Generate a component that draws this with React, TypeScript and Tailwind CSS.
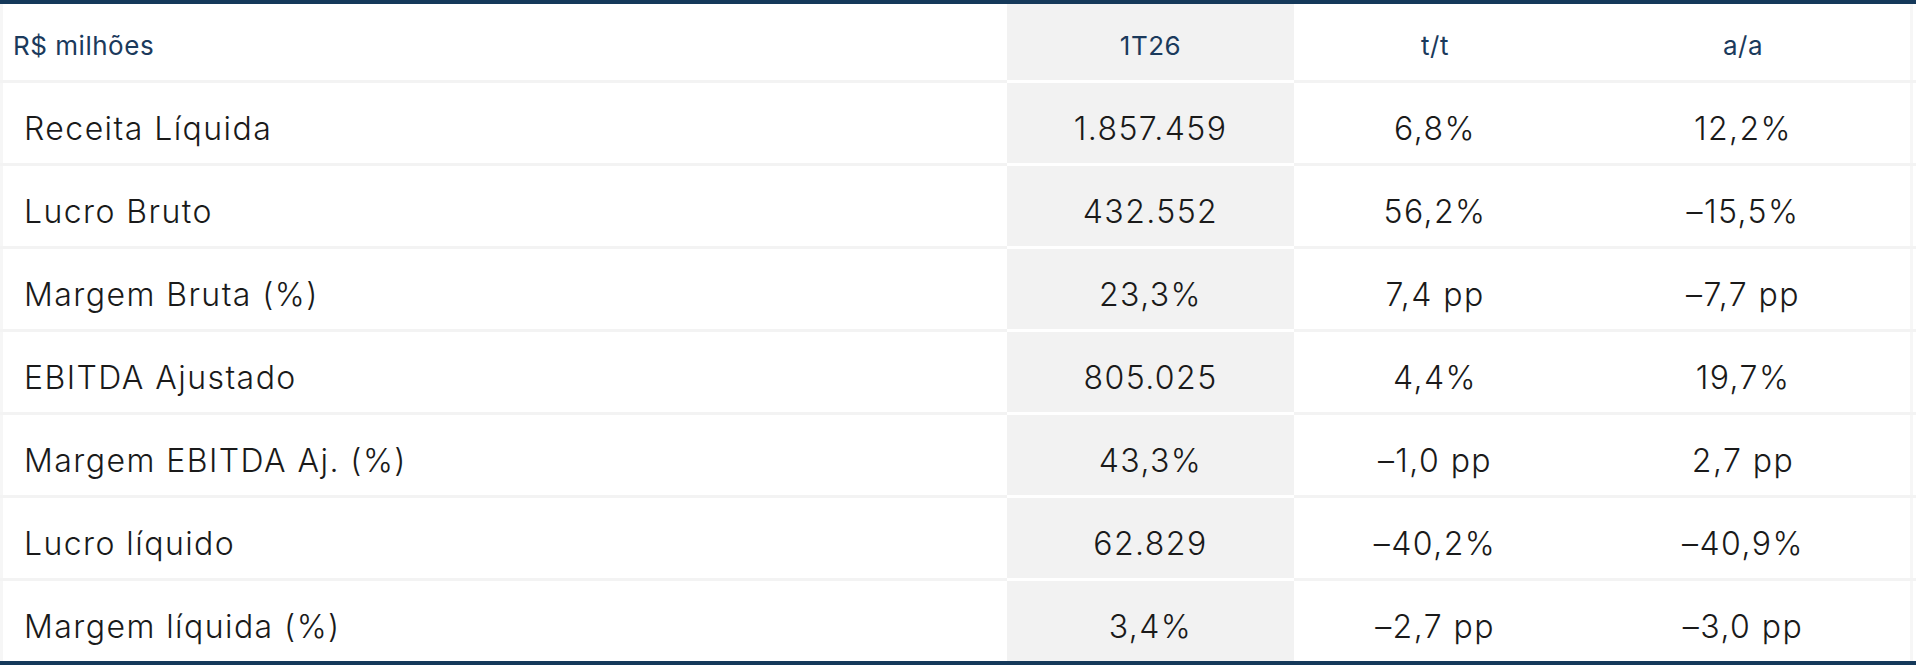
import React from 'react';

const rows = [
  { label: 'Receita Líquida', v: '1.857.459', qoq: '6,8%', yoy: '12,2%' },
  { label: 'Lucro Bruto', v: '432.552', qoq: '56,2%', yoy: '–15,5%' },
  { label: 'Margem Bruta (%)', v: '23,3%', qoq: '7,4 pp', yoy: '–7,7 pp' },
  { label: 'EBITDA Ajustado', v: '805.025', qoq: '4,4%', yoy: '19,7%' },
  { label: 'Margem EBITDA Aj. (%)', v: '43,3%', qoq: '–1,0 pp', yoy: '2,7 pp' },
  { label: 'Lucro líquido', v: '62.829', qoq: '–40,2%', yoy: '–40,9%' },
  { label: 'Margem líquida (%)', v: '3,4%', qoq: '–2,7 pp', yoy: '–3,0 pp' },
];

const cols = 'grid grid-cols-[1007px_287px_282px_337px]';

export default function App() {
  return (
    <div className="w-[1920px] h-[666px] bg-white font-['Inter','Liberation_Sans',sans-serif]">
      <div className="w-[1916px] border-t-4 border-b-4 border-[#15395a]">
        {/* Header */}
        <div className={`${cols} h-[79px] border-b-[3px] border-[#f3f3f3] text-[26px] tracking-[0.02em] font-normal text-[#1b3a5c]`}>
          <div className="flex items-center pt-[7px] pl-[10px] border-l-[3px] border-[#f6f6f6]">R$ milhões</div>
          <div className="flex items-center justify-center pt-[7px] bg-[#f2f2f2] border-b-[3px] border-white -mb-[3px]">1T26</div>
          <div className="flex items-center justify-center pt-[7px]">t/t</div>
          <div className="flex items-center justify-center pt-[7px] border-r-[3px] border-[#f6f6f6]">a/a</div>
        </div>

        {rows.map((r, i) => {
          const last = i === rows.length - 1;
          return (
            <div
              key={r.label}
              className={`${cols} font-light text-[32px] tracking-[0.045em] text-[#1a1a1a] ${last ? 'h-[80px]' : 'h-[83px] border-b-[3px] border-[#f3f3f3]'}`}
            >
              <div className="flex items-center pt-[12px] pl-[21px] border-l-[3px] border-[#f6f6f6]">{r.label}</div>
              <div
                className={`flex items-center justify-center pt-[12px] bg-[#f2f2f2] ${last ? '' : 'border-b-[3px] border-white -mb-[3px]'}`}
              >
                {r.v}
              </div>
              <div className="flex items-center justify-center pt-[12px]">{r.qoq}</div>
              <div className="flex items-center justify-center pt-[12px] border-r-[3px] border-[#f6f6f6]">{r.yoy}</div>
            </div>
          );
        })}
      </div>
    </div>
  );
}
